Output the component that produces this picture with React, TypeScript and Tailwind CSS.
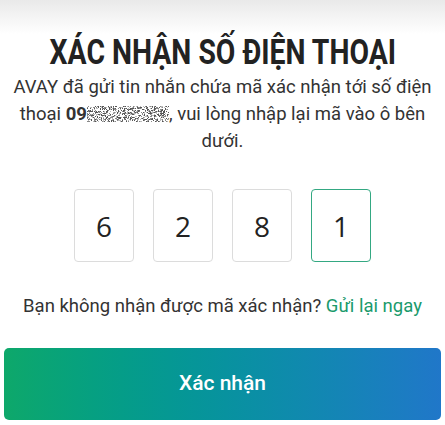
import React from "react";

const digits = ["6", "2", "8", "1"];

// masked phone number: seeded pixel noise
const noise: { x: number; y: number; c: string }[] = [];
let seed = 7;
for (let y = 0; y < 16; y++) {
  for (let x = 0; x < 82; x++) {
    seed = (seed * 1103515245 + 12345) % 2147483648;
    const r = seed / 2147483648;
    if (r < 0.5) noise.push({ x, y, c: r < 0.2 ? "#555" : r < 0.35 ? "#888" : "#bbb" });
  }
}

function Masked() {
  return (
    <svg width="82" height="16" viewBox="0 0 82 16" className="inline-block align-[-2px]" shapeRendering="crispEdges">
      {noise.map((p, i) => (
        <rect key={i} x={p.x} y={p.y} width="1" height="1" fill={p.c} />
      ))}
    </svg>
  );
}

export default function App() {
  return (
    <div className="w-[445px] h-[425px] overflow-hidden bg-[linear-gradient(to_bottom,#e9e9e9,#ffffff_34px)] font-['Roboto','Liberation_Sans',sans-serif] text-[#333]">
      <div className="flex flex-col items-center pt-[31px] px-2">
        <h1 className="inline-block scale-x-[0.81] font-bold text-[35px] leading-[43px] text-[#222] whitespace-nowrap">
          XÁC NHẬN SỐ ĐIỆN THOẠI
        </h1>
        <p className="text-center text-[18.5px] leading-[27px] text-[#333]">
          AVAY đã gửi tin nhắn chứa mã xác nhận tới số điện thoại{" "}
          <b className="font-bold">09</b>
          <Masked />
          , vui lòng nhập lại mã vào ô bên dưới.
        </p>
      </div>

      <div className="flex justify-center gap-[19px] mt-[34px]">
        {digits.map((d, i) => (
          <div
            key={i}
            className={
              i === 3
                ? "w-[60px] h-[73px] rounded-[4px] border border-[#34a882] flex items-center justify-center font-['Open_Sans',sans-serif] font-medium text-[28px] text-[#222]"
                : "w-[60px] h-[73px] rounded-[4px] border border-[#dcdcdc] flex items-center justify-center font-['Open_Sans',sans-serif] font-medium text-[28px] text-[#222]"
            }
          >
            {d}
          </div>
        ))}
      </div>

      <p className="mt-[32px] text-center text-[18.5px] leading-[24px] text-[#333]">
        Bạn không nhận được mã xác nhận? <span className="text-[#1a9a6c]">Gửi lại ngay</span>
      </p>

      <div className="px-1 mt-[30px]">
        <button className="w-full h-[72px] rounded-[5px] bg-gradient-to-r from-[#0ea86a] to-[#2077c9] text-white text-[21px] font-medium">
          Xác nhận
        </button>
      </div>
    </div>
  );
}
